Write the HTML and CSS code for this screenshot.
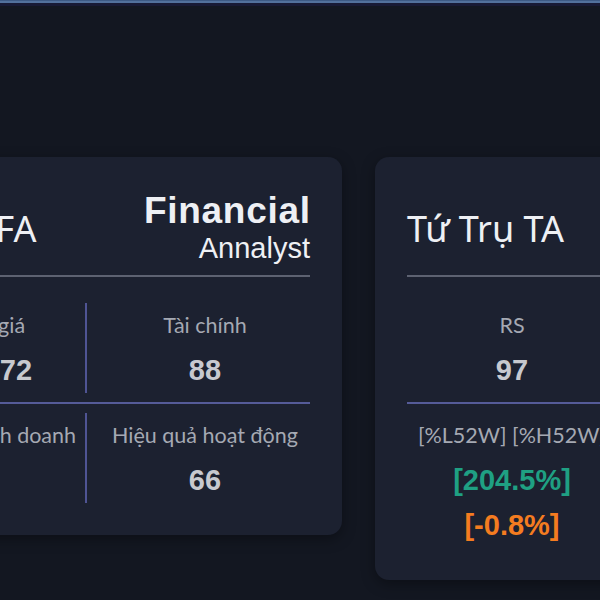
FILE: index.html
```html
<!DOCTYPE html>
<html lang="vi">
<head>
<meta charset="utf-8">
<title>Tứ Trụ</title>
<link rel="stylesheet" href="styles.css">
</head>
<body>
<div class="topbar"></div>
<main class="board">
  <div class="cards">
    <section class="card">
      <header class="card-head">
        <h2 class="card-title card-title--fa">Tứ Trụ FA</h2>
        <div class="brand">
          <div class="brand-main">Financial</div>
          <div class="brand-sub">Annalyst</div>
        </div>
      </header>
      <div class="metrics">
        <div class="cell">
          <div class="label">Chỉ số về giá</div>
          <div class="value">Rất tốt 72</div>
        </div>
        <div class="vline"></div>
        <div class="cell">
          <div class="label">Tài chính</div>
          <div class="value">88</div>
        </div>
        <div class="hline"></div>
        <div class="cell">
          <div class="label">Chất lượng kinh doanh</div>
          <div class="value">75</div>
        </div>
        <div class="vline"></div>
        <div class="cell">
          <div class="label">Hiệu quả hoạt động</div>
          <div class="value">66</div>
        </div>
      </div>
    </section>

    <section class="card">
      <header class="card-head">
        <h2 class="card-title">Tứ Trụ TA</h2>
      </header>
      <div class="metrics">
        <div class="cell">
          <div class="label">RS</div>
          <div class="value">97</div>
        </div>
        <div class="vline"></div>
        <div class="cell">
          <div class="label">Xu hướng</div>
          <div class="value">Tăng</div>
        </div>
        <div class="hline"></div>
        <div class="cell">
          <div class="label">[%L52W] [%H52W]</div>
          <div class="value up">[204.5%]</div>
          <div class="value down">[-0.8%]</div>
        </div>
        <div class="vline"></div>
        <div class="cell">
          <div class="label">Dòng tiền</div>
          <div class="value">Mạnh</div>
        </div>
      </div>
    </section>
  </div>
</main>
</body>
</html>
```

FILE: styles.css
```css
html, body {
  margin: 0;
  padding: 0;
}

body {
  background: #131721;
  overflow: hidden;
  height: 600px;
}

.topbar {
  height: 3px;
  background: linear-gradient(#3d5a85 0 40%, #52719c 40% 100%);
  border-bottom: 3px solid #181a35;
}

.board {
  padding-top: 151px;
}

.cards {
  display: flex;
  align-items: flex-start;
  gap: 33px;
  margin-left: -171px;
}

.card {
  flex: none;
  width: 513px;
  box-sizing: border-box;
  padding: 32px;
  background: #1c2130;
  border-radius: 14px;
  box-shadow: 0 4px 14px rgba(0, 0, 0, 0.35);
}

.card-head {
  display: flex;
  align-items: center;
  justify-content: space-between;
  height: 88px;
  box-sizing: border-box;
  padding-bottom: 6px;
  border-bottom: 2px solid #5d6271;
}

.card-title {
  margin: 0;
  font-family: "Noto Sans", "Open Sans", sans-serif;
  font-weight: 400;
  font-size: 36px;
  line-height: 1.2;
  color: #eef0f4;
}

.card-title--fa {
  word-spacing: 9px;
}

.brand {
  text-align: right;
  font-family: "Liberation Sans", Arial, sans-serif;
  color: #eef0f4;
}

.brand-main {
  font-size: 37px;
  font-weight: 700;
  line-height: 34px;
  letter-spacing: 0.7px;
  margin-right: -0.7px;
}

.brand-sub {
  font-size: 29px;
  line-height: 34px;
  margin-top: 3px;
}

.metrics {
  display: grid;
  grid-template-columns: minmax(0, 1fr) 29px minmax(0, 1fr);
  margin-top: 26px;
}

.cell {
  padding: 8px 0;
  text-align: center;
  white-space: nowrap;
}

.vline {
  justify-self: center;
  width: 2px;
  background: #4f5494;
}

.hline {
  grid-column: 1 / -1;
  height: 2px;
  margin: 9px 0;
  background: #555b98;
}

.label {
  font-family: Lato, "Noto Sans", sans-serif;
  font-size: 21.5px;
  line-height: 28px;
  color: #a5a9b3;
}

.value {
  margin-top: 16px;
  font-family: "Liberation Sans", Arial, sans-serif;
  font-weight: 700;
  font-size: 29px;
  line-height: 30px;
  color: #c7c9cf;
}

.value + .value {
  margin-top: 15px;
}

.value.up {
  color: #1fa083;
}

.value.down {
  color: #f47c20;
}
```
